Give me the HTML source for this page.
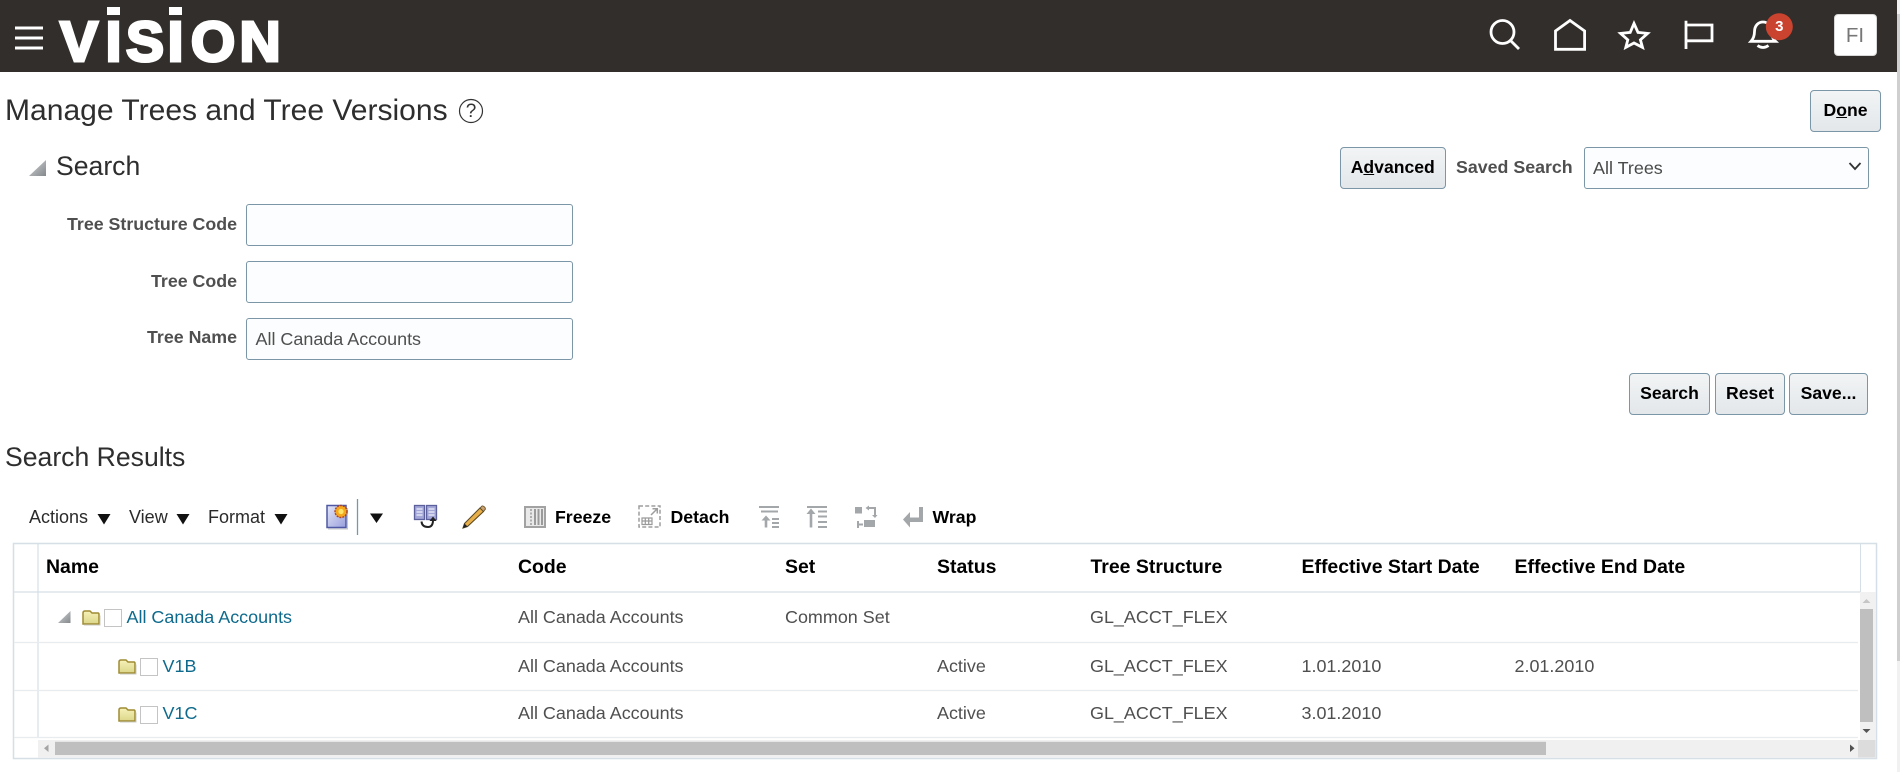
<!DOCTYPE html>
<html lang="en"><head><meta charset="utf-8"><title>Manage Trees and Tree Versions</title>
<style>
html,body{margin:0;padding:0;width:1900px;height:772px;overflow:hidden;background:#fff;font-family:"Liberation Sans",Arial,sans-serif}
.a{position:absolute}
.t{position:absolute;white-space:nowrap;line-height:24px;height:24px}
.lb{font-size:17.8px;font-weight:bold;color:#4f4f4f;text-align:right}
.in{position:absolute;box-sizing:border-box;background:#fbfdfe;border:1px solid #7b96a6;border-radius:3px}
.btn{position:absolute;box-sizing:border-box;border:1px solid #7b96a6;border-radius:4px;background:linear-gradient(#f2f4f5,#e3e7ea);font-weight:bold;font-size:17.6px;color:#000;text-align:center;line-height:39px}
.th{font-size:19.45px;font-weight:bold;color:#000}
.d{font-size:17.95px;color:#4f4f4f}
.l{font-size:17.95px;color:#0e6a8c}
.tb{font-size:18px;color:#2b2b2b}
.tbb{font-size:17.7px;font-weight:bold;color:#000}
.cb{position:absolute;box-sizing:border-box;width:18px;height:18px;background:#fff;border:1px solid #c4c4c4}
u{text-decoration:underline}
#logo{position:absolute;left:56.5px;top:0;height:72px;line-height:84px;font-size:57px;font-weight:bold;color:#fff;-webkit-text-stroke:3px #fff;white-space:nowrap}
#logo span{display:inline-block;text-align:center}
</style></head>
<body>
<div class="a" style="left:0;top:0;width:1897px;height:72px;background:#322e2b"></div>
<div class="a" style="left:1897px;top:0;width:3px;height:772px;background:#f1f1f1"></div>
<div class="a" style="left:1897px;top:14px;width:3px;height:647px;background:#cfcfcf"></div>

<div id="logo"><span style="width:45px">V</span><span style="width:24px">I</span><span style="width:39px">S</span><span style="width:22px">I</span><span style="width:53px">O</span><span style="width:41px">N</span></div>

<svg class="a" style="left:0;top:0" width="1900" height="772" viewBox="0 0 1900 772" fill="none">
<defs>
<linearGradient id="tri" x1="0" y1="0" x2="1" y2="1"><stop offset="0" stop-color="#d4d6d8"/><stop offset="1" stop-color="#84888c"/></linearGradient>
<linearGradient id="fold" x1="0" y1="0" x2="0" y2="1"><stop offset="0" stop-color="#f6f2b8"/><stop offset="1" stop-color="#dcd68a"/></linearGradient>
<linearGradient id="doc" x1="0" y1="0" x2="1" y2="1"><stop offset="0" stop-color="#e4e6f8"/><stop offset="1" stop-color="#989fdc"/></linearGradient>
<g id="folder"><path d="M1 3.5Q1 1.5 3 1.5H8L10 3.5H16Q17 3.5 17 5V14.5H1Z" fill="url(#fold)" stroke="#a08c34" stroke-width="1.5"/><path d="M2 15.5H18V6" stroke="#c9c9c0" stroke-width="1"/></g>
</defs>
<!-- hamburger -->
<path d="M15 28H43M15 38H43M15 48H43" stroke="#fff" stroke-width="3"/>
<!-- logo dots -->
<rect x="107" y="7" width="13" height="8" fill="#fff"/><rect x="169" y="7" width="13" height="8" fill="#fff"/>
<!-- header icons -->
<g stroke="#fff" stroke-width="2.8">
<circle cx="1502.5" cy="32" r="11.5"/><path d="M1510.5 40.5L1519 49"/>
<path d="M1555.5 49.3V31L1570 20.5L1584.6 31V49.3Z"/>
<path d="M1634 23.5L1638 32.4L1647.6 33.4L1640.4 39.8L1642.5 47.4L1634 43L1625.8 47.4L1627.8 39.8L1620.6 33.4L1630.2 32.4Z"/>
<path d="M1686 20.7V49M1686 25H1712V40.8H1686"/>
<path d="M1751 41.3H1775.5C1772 38 1771.5 35 1771.5 31.5C1771.5 25.5 1767.5 22 1763 22C1758.5 22 1754.5 25.5 1754.5 31.5C1754.5 35 1754 38 1751 41.3Z"/>
<path d="M1757.5 45.5Q1763 49.5 1768.5 45.5"/>
</g>
<circle cx="1779.3" cy="26.7" r="13.5" fill="#c9432f"/>
<!-- help icon -->
<circle cx="471" cy="111" r="11.5" stroke="#333" stroke-width="1.2"/>
<!-- collapse triangles -->
<path d="M46 160V176H29Z" fill="url(#tri)"/>
<path d="M70.5 611V623H58Z" fill="url(#tri)"/>
<!-- toolbar triangles -->
<g fill="#111"><path d="M97.5 514H110.5L104 524.5Z"/><path d="M176.5 514H189.5L183 524.5Z"/><path d="M274.5 514H287.5L281 524.5Z"/><path d="M370 513.5H383L376.5 523Z"/></g>
<path d="M357.5 499V535" stroke="#7b96a6" stroke-width="1.3"/>
<!-- new icon -->
<rect x="327" y="505.5" width="19" height="22" fill="url(#doc)" stroke="#4f58a4" stroke-width="1.5"/>
<path d="M328 529H347.5V508" stroke="#c5c5c5"/>
<circle cx="341" cy="511.5" r="6" fill="#f6a81c" stroke="#a83f28" stroke-width="1.4" stroke-dasharray="2 1"/>
<circle cx="341" cy="511.5" r="2.6" fill="#ffe46a"/>
<!-- query icon -->
<g stroke="#5b5f9c" stroke-width="1.3" fill="#a3a7d8"><rect x="414.5" y="505.5" width="10" height="14"/><rect x="426.5" y="505.5" width="10" height="14"/></g>
<path d="M416.5 509H422.5M416.5 512H422.5M416.5 515H422.5M428.5 509H434.5M428.5 512H434.5M428.5 515H434.5" stroke="#eef0fb" stroke-width="1.2"/>
<path d="M421.5 521.5Q422 527 428 527Q433 527 433 520" stroke="#222" stroke-width="2"/>
<path d="M429.5 521H436.5L433 516.5Z" fill="#222"/>
<!-- pencil -->
<path d="M480 508L483.5 511.5L467.5 526.5L463 528L464.5 523.5Z" fill="#e9b04a" stroke="#5d4a22" stroke-width="1.1"/>
<path d="M480 508L482 506Q483.5 505.5 485 507.5L485.5 509L483.5 511.5Z" fill="#c9a070" stroke="#5d4a22" stroke-width=".8"/>
<path d="M463 528L464.5 523.5L467.5 526.5Z" fill="#222"/>
<!-- freeze -->
<rect x="525" y="507" width="20" height="20" fill="#e9e9e9" stroke="#a2a2a2" stroke-width="2"/>
<path d="M531 509V525" stroke="#9a9a9a" stroke-width="1.5" stroke-dasharray="2 1.5"/>
<path d="M535 509V525M538.5 509V525M542 509V525" stroke="#9a9a9a" stroke-width="2"/>
<!-- detach -->
<rect x="639" y="506" width="21" height="21" stroke="#9d9d9d" stroke-width="1.5" stroke-dasharray="4 2.2"/>
<path d="M642 518H652V524.5H642ZM642 521H652M645.3 518V524.5M648.7 518V524.5" stroke="#9a9a9a" stroke-width="1.2"/>
<path d="M651 515L657 509M652.5 508.7H657.3V513.5" stroke="#9d9d9d" stroke-width="1.5"/>
<!-- indent icons -->
<g stroke="#a3a7aa" stroke-width="2">
<path d="M759 507H779M761 511.5H778M772 519H779M772 523H779M772 527H779"/>
<path d="M766 519V527.5" stroke-width="2.6"/>
<path d="M807 507H827M818 511.5H827M818 516.5H827M818 522H827M818 527H827"/>
<path d="M811 512V527.5" stroke-width="2.6"/>
<path d="M858 521V528M858 524.5H863M869 508H875V515"/>
</g>
<path d="M761.5 520.5H770.5L766 515.5ZM806.5 514H815.5L811 508.5ZM872 515H877.5L875 518ZM869 505.5V510.5L865.5 508Z" fill="#a3a7aa"/>
<path d="M855 507H862V513.5H855ZM864 520H875V527H864Z" fill="#a3a7aa"/>
<path d="M919 507H923V522H910V527.5L903 519.5L910 512V517.5H919Z" fill="#a3a7aa"/>
<!-- table -->
<rect x="13.5" y="543.5" width="1863" height="215" stroke="#d6dfe6" stroke-width="1.5"/>
<path d="M38 544V737" stroke="#d6dfe6" stroke-width="1.2"/>
<path d="M1860.5 544V592" stroke="#d6dfe6" stroke-width="1"/>
<path d="M14 592H1860" stroke="#d6dfe6" stroke-width="1.3"/>
<path d="M14 642.5H1858M14 690.5H1858M14 737.5H1858" stroke="#e9ecee" stroke-width="1.2"/>
<!-- scrollbars -->
<rect x="1860" y="592" width="15.5" height="148" fill="#f1f1f1"/>
<rect x="1860" y="609" width="13" height="113" fill="#bfbfbf"/>
<path d="M1862.5 603L1866.5 599L1870.5 603Z" fill="#c6c6c6"/>
<path d="M1862.5 729L1866.5 733L1870.5 729Z" fill="#555"/>
<rect x="38" y="740" width="1820" height="17.5" fill="#f0f0f0"/>
<rect x="1858" y="740" width="17.5" height="17.5" fill="#dcdcdc"/>
<rect x="55" y="741.8" width="1491" height="13.2" fill="#bfbfbf"/>
<path d="M48.5 744.5V752L44 748.2Z" fill="#a4a4a4"/>
<path d="M1850 744.5V752L1854.5 748.2Z" fill="#505050"/>
<!-- folders -->
<use href="#folder" x="82" y="609.5"/><use href="#folder" x="118" y="658.5"/><use href="#folder" x="118" y="706.5"/>
</svg>

<div class="t" style="left:1771.3px;top:14.5px;font-size:15px;font-weight:bold;color:#fff;width:16px;text-align:center">3</div>
<div class="a" style="left:1833.5px;top:13.5px;width:43px;height:42.5px;box-sizing:border-box;background:#fff;border:1px solid #d8d8d8;border-radius:4px;text-align:center;font-size:20.5px;line-height:41px;color:#777">FI</div>

<div class="t" style="left:5px;top:99px;font-size:30.05px;color:#2e2e2e;line-height:24px">Manage Trees and Tree Versions</div>
<div class="t" style="left:465px;top:99.5px;font-size:19px;color:#333;width:12px;text-align:center">?</div>
<div class="btn" style="left:1810px;top:90px;width:71px;height:42px">D<u>o</u>ne</div>
<div class="t" style="left:56px;top:154px;font-size:26.6px;color:#2e2e2e">Search</div>
<div class="btn" style="left:1339.5px;top:147px;width:106.5px;height:42px">A<u>d</u>vanced</div>
<div class="t lb" style="left:1456px;top:155px">Saved Search</div>
<div class="in" style="left:1584px;top:147px;width:285px;height:42px"></div>
<div class="t d" style="left:1593px;top:156px;color:#4a4a4a">All Trees</div>
<svg class="a" style="left:1845px;top:158px" width="20" height="16" fill="none"><path d="M4.5 5L10 11L15.5 5" stroke="#333" stroke-width="1.8"/></svg>

<div class="t lb" style="left:37px;top:212px;width:200px">Tree Structure Code</div>
<div class="in" style="left:246px;top:204px;width:327px;height:42px"></div>
<div class="t lb" style="left:37px;top:268.5px;width:200px">Tree Code</div>
<div class="in" style="left:246px;top:261px;width:327px;height:42px"></div>
<div class="t lb" style="left:37px;top:325px;width:200px">Tree Name</div>
<div class="in" style="left:246px;top:318px;width:327px;height:42px"></div>
<div class="t d" style="left:255.5px;top:327px">All Canada Accounts</div>

<div class="btn" style="left:1629px;top:373px;width:81px;height:42px">Search</div>
<div class="btn" style="left:1715px;top:373px;width:70px;height:42px">Reset</div>
<div class="btn" style="left:1789px;top:373px;width:79px;height:42px">Save...</div>

<div class="t" style="left:5px;top:445px;font-size:26.6px;color:#2e2e2e">Search Results</div>

<div class="t tb" style="left:29px;top:505px">Actions</div>
<div class="t tb" style="left:129px;top:505px">View</div>
<div class="t tb" style="left:208px;top:505px">Format</div>
<div class="t tbb" style="left:555px;top:505px">Freeze</div>
<div class="t tbb" style="left:670.5px;top:505px">Detach</div>
<div class="t tbb" style="left:932.5px;top:505px">Wrap</div>

<div class="t th" style="left:46px;top:555px">Name</div>
<div class="t th" style="left:518px;top:555px">Code</div>
<div class="t th" style="left:785px;top:555px">Set</div>
<div class="t th" style="left:937px;top:555px">Status</div>
<div class="t th" style="left:1090.5px;top:555px">Tree Structure</div>
<div class="t th" style="left:1301.5px;top:555px">Effective Start Date</div>
<div class="t th" style="left:1514.5px;top:555px">Effective End Date</div>

<div class="cb" style="left:104px;top:609px"></div>
<div class="t l" style="left:126.5px;top:604.5px">All Canada Accounts</div>
<div class="t d" style="left:518px;top:604.5px">All Canada Accounts</div>
<div class="t d" style="left:785px;top:604.5px">Common Set</div>
<div class="t d" style="left:1090px;top:604.5px">GL_ACCT_FLEX</div>

<div class="cb" style="left:140px;top:658px"></div>
<div class="t l" style="left:162.5px;top:653.5px">V1B</div>
<div class="t d" style="left:518px;top:653.5px">All Canada Accounts</div>
<div class="t d" style="left:937px;top:653.5px">Active</div>
<div class="t d" style="left:1090px;top:653.5px">GL_ACCT_FLEX</div>
<div class="t d" style="left:1301.5px;top:653.5px">1.01.2010</div>
<div class="t d" style="left:1514.5px;top:653.5px">2.01.2010</div>

<div class="cb" style="left:140px;top:706px"></div>
<div class="t l" style="left:162.5px;top:700.5px">V1C</div>
<div class="t d" style="left:518px;top:700.5px">All Canada Accounts</div>
<div class="t d" style="left:937px;top:700.5px">Active</div>
<div class="t d" style="left:1090px;top:700.5px">GL_ACCT_FLEX</div>
<div class="t d" style="left:1301.5px;top:700.5px">3.01.2010</div>
</body></html>
